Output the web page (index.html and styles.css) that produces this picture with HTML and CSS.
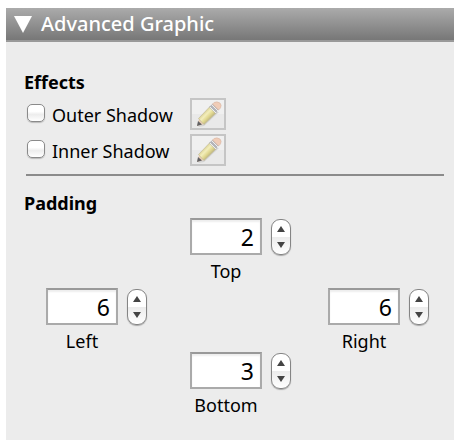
FILE: index.html
```html
<!DOCTYPE html>
<html lang="en">
<head>
<meta charset="utf-8">
<title>Advanced Graphic</title>
<link rel="stylesheet" href="styles.css">
</head>
<body>
<svg class="defs" aria-hidden="true">
  <defs>
    <linearGradient id="wood" x1="0.2" y1="0.2" x2="0.8" y2="0.8">
      <stop offset="0.2" stop-color="#dcd497"/>
      <stop offset="0.4" stop-color="#f3eebc"/>
      <stop offset="0.6" stop-color="#e2d992"/>
      <stop offset="0.85" stop-color="#b5ad7c"/>
    </linearGradient>
    <symbol id="pencil" viewBox="0 0 28 28">
      <path d="M4 27L10 26L25 12L20 12Z" fill="#d3d3d3"/>
      <path d="M3 26L5 19L10 24Z" fill="#e9cdb4"/>
      <path d="M3 26L4 21L8 24.500Z" fill="#616164"/>
      <path d="M4.500 18.500L16 6.500L22 13L10 24.500Z" fill="url(#wood)" stroke="#bfb793" stroke-width=".6"/>
      <path d="M15 7L19 3.500L25 9.500L21.500 13.500Z" fill="#b4b5b9"/>
      <path d="M16 7L22 13M18 5L24 11" stroke="#eee" stroke-width="1"/>
      <path d="M18.500 4L20 2.500Q23 1 26 3Q28 5 26.500 8L24.500 10Z" fill="#f0ccb7" stroke="#d3b19f" stroke-width=".5"/>
    </symbol>
  </defs>
</svg>
<main class="panel">
  <button class="header" type="button" aria-expanded="true">
    <svg class="triangle" viewBox="0 0 18 17" aria-hidden="true"><path d="M0 0H18L9 17Z" fill="#fff"/></svg>
    <span>Advanced Graphic</span>
  </button>
  <div class="body">
    <section class="effects">
      <h2>Effects</h2>
      <div class="effect">
        <input type="checkbox" id="outer"><label for="outer">Outer Shadow</label>
        <button class="edit" type="button" aria-label="Edit outer shadow"><svg aria-hidden="true"><use href="#pencil"/></svg></button>
      </div>
      <div class="effect">
        <input type="checkbox" id="inner"><label for="inner">Inner Shadow</label>
        <button class="edit" type="button" aria-label="Edit inner shadow"><svg aria-hidden="true"><use href="#pencil"/></svg></button>
      </div>
    </section>
    <hr>
    <section>
      <h2>Padding</h2>
      <div class="sides">
        <div class="side top">
          <input type="text" id="top" value="2">
          <div class="stepper"><button type="button" aria-label="Increase top"></button><button type="button" aria-label="Decrease top"></button></div>
          <label for="top">Top</label>
        </div>
        <div class="side left">
          <input type="text" id="left" value="6">
          <div class="stepper"><button type="button" aria-label="Increase left"></button><button type="button" aria-label="Decrease left"></button></div>
          <label for="left">Left</label>
        </div>
        <div class="side right">
          <input type="text" id="right" value="6">
          <div class="stepper"><button type="button" aria-label="Increase right"></button><button type="button" aria-label="Decrease right"></button></div>
          <label for="right">Right</label>
        </div>
        <div class="side bottom">
          <input type="text" id="bottom" value="3">
          <div class="stepper"><button type="button" aria-label="Increase bottom"></button><button type="button" aria-label="Decrease bottom"></button></div>
          <label for="bottom">Bottom</label>
        </div>
      </div>
    </section>
  </div>
</main>
</body>
</html>
```
FILE: styles.css
```css
* { box-sizing: border-box; }
body {
  margin: 0;
  padding: 8px 0 4px 6px;
  background: #fff;
  color: #000;
  font: 18px/24px "Noto Sans", sans-serif;
}
.defs { position: absolute; width: 0; height: 0; }
button, input { margin: 0; padding: 0; font: inherit; color: inherit; }
.panel { background: #ececec; }
.header {
  display: flex;
  align-items: center;
  gap: 9px;
  width: 100%;
  height: 34px;
  padding: 0 8px;
  border: 0;
  border-bottom: 2px solid #999;
  background: linear-gradient(#ababab, #777);
  color: #fff;
  font-size: 20px;
  font-weight: 500;
}
.triangle { width: 18px; height: 17px; }
.body { padding: 28px 10px 24px 18px; }
h2 { margin: 0; font-size: 18px; line-height: 24px; font-weight: 700; }
.effects { display: grid; gap: 4px; }
.effect {
  display: grid;
  grid-template-columns: 28px 138px 36px;
  align-items: center;
}
.effect label { padding-top: 2px; }
.effect input {
  appearance: none;
  width: 18px;
  height: 18px;
  margin: 0 3px 2px;
  border: 1px solid #8a8a8a;
  border-radius: 5px;
  background: linear-gradient(#fff 40%, #ededed 60%, #fff);
  box-shadow: 0 1px 1px #bbb;
}
.edit {
  width: 36px;
  height: 32px;
  border: 2px solid #c5c5c5;
  background: linear-gradient(#f0f0f0 50%, #e9e9e9 50%);
}
.edit svg { display: block; width: 28px; height: 28px; margin: auto; }
hr { height: 2px; margin: 8px 0 15px 2px; border: 0; background: #8b8b8b; }
.sides {
  display: grid;
  grid-template-columns: 144fr 138fr 102fr;
  grid-template-areas: ". top ." "left . right" ". bottom .";
  padding: 3px 14px 0 22px;
}
.side {
  display: grid;
  grid-template-columns: 72px 20px;
  column-gap: 9px;
  row-gap: 5px;
  align-items: center;
  align-content: start;
}
.top { grid-area: top; padding-bottom: 6px; }
.left { grid-area: left; }
.right { grid-area: right; }
.bottom { grid-area: bottom; }
.side input {
  width: 100%;
  height: 37px;
  padding: 0 6px;
  border: 2px solid #aaa;
  border-top-color: #999;
  border-radius: 0;
  background: #fff;
  box-shadow: inset 0 2px 2px #eee;
  font-size: 23px;
  text-align: right;
}
.side label { line-height: 22px; text-align: center; }
.stepper {
  display: flex;
  flex-direction: column;
  height: 36px;
  border: 1px solid #858585;
  border-radius: 9px;
  background: linear-gradient(#fff 50%, #ececec 50%, #fff);
  box-shadow: 0 1px 1px #aaa;
}
.stepper button {
  display: grid;
  flex: 1;
  justify-items: center;
  align-items: end;
  padding-bottom: 5px;
  border: 0;
  background: none;
}
.stepper button + button { align-items: start; padding: 5px 0 0; }
.stepper button::before {
  content: "";
  border: solid transparent;
  border-width: 0 4px 6px;
  border-bottom-color: #444;
}
.stepper button + button::before {
  border-width: 6px 4px 0;
  border-top-color: #444;
}
```
